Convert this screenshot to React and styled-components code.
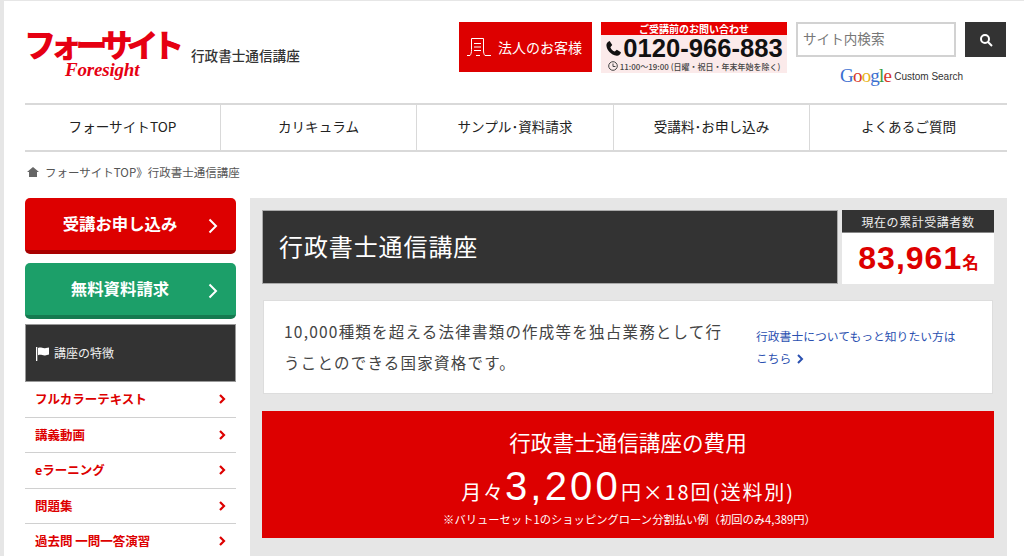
import React from "react";
import styled, { createGlobalStyle } from "styled-components";

const GlobalStyle = createGlobalStyle`
  html, body {
    margin: 0;
    padding: 0;
    background: #fff;
    overflow: hidden;
  }
  body {
    font-family: "Liberation Sans", "Noto Sans CJK JP", sans-serif;
  }
  * { box-sizing: border-box; }
`;

const Page = styled.div`
  width: 1024px;
  height: 556px;
  overflow: hidden;
  background: #fff;
  border-top: 1px solid #e6e6e6;
  border-left: 4px solid #e6e6e6;
  padding-left: 21px;
  color: #333;
`;

const Inner = styled.div`
  width: 982px;
`;

const Header = styled.header`
  height: 102px;
  display: flex;
  align-items: flex-start;
`;

const LogoBox = styled.a`
  width: 166px;
  padding-top: 27px;
  display: block;
`;

const LogoKana = styled.div`
  font: 900 32px/30px "Noto Sans CJK JP", sans-serif;
  letter-spacing: -6.2px;
  margin-left: -1px;
  color: #e60012;
  white-space: nowrap;
`;

const LogoRoman = styled.div`
  font: italic 700 19px/19px "Liberation Serif", serif;
  letter-spacing: -0.2px;
  color: #e60012;
  margin: 2px 0 0 40px;
`;

const SiteName = styled.div`
  width: 268px;
  margin-top: 46px;
  font: 500 13.6px/16px "Noto Sans CJK JP", sans-serif;
  color: #333;
`;

const CorpButton = styled.a`
  width: 133px;
  height: 50px;
  margin-top: 21px;
  background: #dd0000;
  color: #fff;
  display: flex;
  align-items: center;
  gap: 6px;
  padding-left: 7px;
  font: 400 14px/16px "Noto Sans CJK JP", sans-serif;
`;

const TelBox = styled.div`
  width: 186px;
  height: 51px;
  margin: 21px 0 0 9px;
  background: #fbeaea;
  text-align: center;
`;

const TelHead = styled.div`
  height: 13px;
  background: #e60000;
  color: #fff;
  font: 700 10px/13px "Noto Sans CJK JP", sans-serif;
`;

const TelNumber = styled.div`
  height: 26px;
  display: flex;
  align-items: center;
  justify-content: center;
  gap: 1px;
  font: 700 25.6px/26px "Liberation Sans", sans-serif;
  color: #111;
  white-space: nowrap;
`;

const TelHours = styled.div`
  display: flex;
  align-items: center;
  justify-content: center;
  gap: 2px;
  font: 500 8px/9px "Noto Sans CJK JP", sans-serif;
  color: #444;
  white-space: nowrap;
`;

const SearchArea = styled.div`
  margin: 21px 0 0 9px;
  width: 210px;
`;

const SearchRow = styled.div`
  display: flex;
  justify-content: space-between;
`;

const SearchInput = styled.div`
  width: 160px;
  height: 35px;
  border: 2px solid #d2d2d2;
  padding-left: 5px;
  font: 400 13.6px/29px "Noto Sans CJK JP", sans-serif;
  color: #777;
  background: #fff;
`;

const SearchButton = styled.button`
  width: 41px;
  height: 35px;
  border: 0;
  padding: 0;
  background: #333;
  display: flex;
  align-items: center;
  justify-content: center;
`;

const GoogleRow = styled.div`
  margin: 9px 0 0 44px;
  display: flex;
  align-items: center;
  gap: 3px;
  white-space: nowrap;
`;

const GoogleWord = styled.span`
  font: 400 19px/20px "Liberation Serif", serif;
  letter-spacing: -0.8px;
`;

const GoogleLetter = styled.span`
  color: ${p => p.$color};
`;

const CustomSearch = styled.span`
  font: 400 10px/12px "Liberation Sans", sans-serif;
  color: #333;
  margin-top: 2px;
`;

const Nav = styled.nav`
  height: 49px;
  display: grid;
  grid-template-columns: 195px 196px 197px 196px 198px;
  border-top: 2px solid #d9d9d9;
  border-bottom: 2px solid #d9d9d9;
`;

const NavItem = styled.a`
  display: flex;
  align-items: center;
  justify-content: center;
  padding-bottom: 3px;
  font: 400 13.6px/20px "Noto Sans CJK JP", sans-serif;
  color: #222;
  border-left: ${p => (p.$first ? "0" : "1px solid #d9d9d9")};
`;

const Crumbs = styled.div`
  height: 46px;
  display: flex;
  align-items: center;
  padding: 0 0 6px 2px;
  font: 400 11.5px/14px "Noto Sans CJK JP", sans-serif;
  color: #555;
`;

const CrumbLink = styled.a`
  margin-left: 6px;
`;

const CrumbCurrent = styled.span`
  margin-left: 0;
`;

const Columns = styled.div`
  display: flex;
  gap: 14px;
`;

const Sidebar = styled.aside`
  width: 211px;
  flex: none;
`;

const CtaButton = styled.a`
  height: 56px;
  margin-bottom: ${p => p.$gap}px;
  border-radius: 5px;
  background: ${p => p.$bg};
  border-bottom: 4px solid ${p => p.$edge};
  color: #fff;
  position: relative;
  display: flex;
  align-items: center;
  justify-content: center;
  padding: 0 21px 2px 0;
  font: 700 16.4px/20px "Noto Sans CJK JP", sans-serif;
`;

const CtaArrow = styled.svg`
  position: absolute;
  right: 18px;
  top: 20px;
`;

const SideHead = styled.div`
  height: 58px;
  background: #333;
  border: 1px solid #999;
  color: #eee;
  display: flex;
  align-items: center;
  gap: 4px;
  padding: 0 0 0 9px;
  font: 400 12px/16px "Noto Sans CJK JP", sans-serif;
`;

const SideList = styled.ul`
  list-style: none;
  margin: 0;
  padding: 0;
`;

const SideItem = styled.li`
  height: 35.5px;
  border-bottom: 1px solid #d0d0d0;
  padding: 0 10px;
  display: flex;
  align-items: center;
  justify-content: space-between;
  color: #dd0000;
  font: 700 12.5px/16px "Noto Sans CJK JP", sans-serif;
`;

const Main = styled.main`
  width: 757px;
  height: 400px;
  background: #e6e6e6;
  padding: 12px 13px 0 12px;
`;

const TitleRow = styled.div`
  display: flex;
  justify-content: space-between;
  height: 74px;
`;

const TitleBar = styled.h1`
  width: 576px;
  margin: 0;
  background: #333;
  border: 1px solid #aaa;
  color: #fff;
  display: flex;
  align-items: center;
  padding: 0 0 2px 16px;
  font: 400 24px/28px "Noto Sans CJK JP", sans-serif;
  letter-spacing: 0.9px;
`;

const Counter = styled.div`
  width: 152px;
  background: #fff;
`;

const CounterHead = styled.div`
  height: 23px;
  background: #333;
  border-bottom: 1px solid #888;
  color: #eee;
  text-align: center;
  font: 400 12px/23px "Noto Sans CJK JP", sans-serif;
  letter-spacing: 0.55px;
`;

const CounterValue = styled.div`
  color: #dd0000;
  text-align: center;
  font: 700 32px/50px "Liberation Sans", sans-serif;
  letter-spacing: 1px;
  padding-left: 1px;
`;

const CounterUnit = styled.span`
  font: 700 16.5px/20px "Noto Sans CJK JP", sans-serif;
  letter-spacing: 0;
`;

const IntroCard = styled.section`
  height: 94px;
  margin: 16px 1px 17px;
  background: #fff;
  border: 1px solid #ddd;
  display: flex;
  align-items: center;
  padding: 0 0 0 20px;
`;

const IntroText = styled.p`
  width: 472px;
  margin: 0;
  padding-right: 18px;
  font: 400 15.5px/31.5px "Noto Sans CJK JP", sans-serif;
  letter-spacing: 1.22px;
  color: #444;
`;

const IntroLink = styled.a`
  width: 208px;
  font: 400 11.8px/22px "Noto Sans CJK JP", sans-serif;
  color: #2a50b0;
`;

const LinkArrow = styled.svg`
  margin-left: 6px;
  vertical-align: -1px;
`;

const PriceCard = styled.section`
  height: 127px;
  background: #dd0000;
  color: #fff;
  text-align: center;
  padding-top: 15px;
`;

const PriceTitle = styled.h2`
  margin: 0;
  font: 400 21.6px/32px "Noto Sans CJK JP", sans-serif;
`;

const PriceLine = styled.div`
  height: 44px;
  margin-top: 6px;
  font: 400 20px/44px "Noto Sans CJK JP", sans-serif;
  white-space: nowrap;
  letter-spacing: 1.8px;
`;

const PriceBig = styled.span`
  font: 400 40px/44px "Liberation Sans", sans-serif;
  letter-spacing: 3.2px;
`;

const PriceNote = styled.div`
  font: 400 11.3px/16px "Noto Sans CJK JP", sans-serif;
  white-space: nowrap;
  margin-top: 3px;
  padding-left: 3px;
`;

const navItems = ["フォーサイトTOP", "カリキュラム", "サンプル･資料請求", "受講料･お申し込み", "よくあるご質問"];
const sideItems = ["フルカラーテキスト", "講義動画", "eラーニング", "問題集", "過去問 一問一答演習"];
const googleLetters = [["G", "#3b6fd1"], ["o", "#d8372b"], ["o", "#e8b420"], ["g", "#3b6fd1"], ["l", "#3c9a3c"], ["e", "#d8372b"]];

const Chevron = () => (
  <svg width="8" height="10" viewBox="0 0 8 10" fill="none">
    <path d="M2 1l4 4-4 4" stroke="#dd0000" strokeWidth="2.2" />
  </svg>
);

const WhiteArrow = () => (
  <CtaArrow width="10" height="16" viewBox="0 0 10 16" fill="none">
    <path d="M1.500 1.500L8 8l-6.500 6.500" stroke="#fff" strokeWidth="2" />
  </CtaArrow>
);

const App = () => (
  <Page>
    <GlobalStyle />
    <Inner>
      <Header>
        <LogoBox>
          <LogoKana>フォーサイト</LogoKana>
          <LogoRoman>Foresight</LogoRoman>
        </LogoBox>
        <SiteName>行政書士通信講座</SiteName>
        <CorpButton>
          <svg width="26" height="20" viewBox="0 0 26 20" fill="none" stroke="#fff" strokeWidth="1">
            <path d="M1 18.500h3c1-1 1.500-3 1.500-6V1.500h12V5M17.500 5v8c0 3 .5 4.500 1.500 5.500h6M8 6.500h7M8 10h7M8 13.500h7M10 18.500h4" />
          </svg>
          法人のお客様
        </CorpButton>
        <TelBox>
          <TelHead>ご受講前のお問い合わせ</TelHead>
          <TelNumber>
            <svg width="17" height="17" viewBox="0 0 24 24" fill="#111">
              <path d="M6.600 1.500l3.600 5.600-2.600 3c1 2.700 3.400 5.100 6.200 6.300l2.900-2.600 5.800 3.500c-.6 3-3 5.200-6 4.900C8.300 21.100 2.500 14.600 2 7.900c-.2-3 1.700-5.500 4.600-6.400z" />
            </svg>
            0120-966-883
          </TelNumber>
          <TelHours>
            <svg width="10" height="10" viewBox="0 0 10 10" fill="none" stroke="#444">
              <circle cx="5" cy="5" r="4.300" />
              <path d="M5 2.500V5.500H7.500" />
            </svg>
            11:00〜19:00 (日曜・祝日・年末年始を除く)
          </TelHours>
        </TelBox>
        <SearchArea>
          <SearchRow>
            <SearchInput>サイト内検索</SearchInput>
            <SearchButton aria-label="検索">
              <svg width="14" height="14" viewBox="0 0 14 14" fill="none" stroke="#fff" strokeWidth="2">
                <circle cx="6" cy="6" r="4" />
                <path d="M9 9l4 4" />
              </svg>
            </SearchButton>
          </SearchRow>
          <GoogleRow>
            <GoogleWord>
              {googleLetters.map(([letter, color], i) => (
                <GoogleLetter key={i} $color={color}>{letter}</GoogleLetter>
              ))}
            </GoogleWord>
            <CustomSearch>Custom Search</CustomSearch>
          </GoogleRow>
        </SearchArea>
      </Header>

      <Nav>
        {navItems.map((item, i) => (
          <NavItem key={item} $first={i === 0}>{item}</NavItem>
        ))}
      </Nav>

      <Crumbs>
        <svg width="12" height="10" viewBox="0 0 12 10" fill="#666">
          <path d="M6 0l6 5H0zM2 5h8v5H2z" />
        </svg>
        <CrumbLink>フォーサイトTOP》</CrumbLink>
        <CrumbCurrent>行政書士通信講座</CrumbCurrent>
      </Crumbs>

      <Columns>
        <Sidebar>
          <CtaButton $bg="#dd0000" $edge="#a80000" $gap={9}>
            受講お申し込み
            <WhiteArrow />
          </CtaButton>
          <CtaButton $bg="#1c9f69" $edge="#157a50" $gap={5}>
            無料資料請求
            <WhiteArrow />
          </CtaButton>
          <SideHead>
            <svg width="15" height="15" viewBox="0 0 15 15" fill="#fff">
              <path d="M1 1h1.300v14H1zM3 2c3-1.500 4.500 1 8 0l3-.5v7l-3 .8c-3.500.8-5-1.500-8 0z" />
            </svg>
            講座の特徴
          </SideHead>
          <SideList>
            {sideItems.map(item => (
              <SideItem key={item}>
                {item}
                <Chevron />
              </SideItem>
            ))}
          </SideList>
        </Sidebar>

        <Main>
          <TitleRow>
            <TitleBar>行政書士通信講座</TitleBar>
            <Counter>
              <CounterHead>現在の累計受講者数</CounterHead>
              <CounterValue>83,961<CounterUnit>名</CounterUnit></CounterValue>
            </Counter>
          </TitleRow>
          <IntroCard>
            <IntroText>10,000種類を超える法律書類の作成等を独占業務として行うことのできる国家資格です。</IntroText>
            <IntroLink>
              行政書士についてもっと知りたい方はこちら
              <LinkArrow width="7" height="10" viewBox="0 0 7 10" fill="none">
                <path d="M1 1l4 4-4 4" stroke="#2a50b0" strokeWidth="2" />
              </LinkArrow>
            </IntroLink>
          </IntroCard>
          <PriceCard>
            <PriceTitle>行政書士通信講座の費用</PriceTitle>
            <PriceLine>月々<PriceBig>3,200</PriceBig>円×18回(送料別)</PriceLine>
            <PriceNote>※バリューセット1のショッピングローン分割払い例（初回のみ4,389円）</PriceNote>
          </PriceCard>
        </Main>
      </Columns>
    </Inner>
  </Page>
);

export default App;
